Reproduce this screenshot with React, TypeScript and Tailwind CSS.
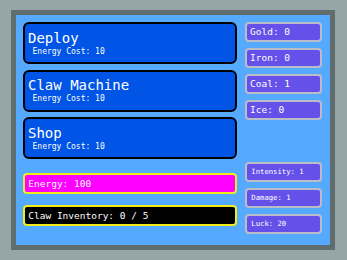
import React from "react";

const mono = { fontFamily: '"DejaVu Sans Mono", "Liberation Mono", monospace' };

function ActionButton({ title }: { title: string }) {
  return (
    <div className="h-[42px] rounded-[6px] border-2 border-black bg-[#0055e6] pl-[3px] pt-[6.5px] text-white">
      <div className="text-[14px] leading-[14px]">{title}</div>
      <div className="mt-[3.3px] pl-[4.5px] text-[8px] leading-[8px]">Energy Cost: 10</div>
    </div>
  );
}

function Stat({ label, small }: { label: string; small?: boolean }) {
  return (
    <div
      className={
        "flex h-[20px] items-center rounded-[4px] border-2 border-[#bcbcc8] bg-[#6650ea] text-white " +
        (small ? "pl-[4.3px] text-[7.25px] leading-none" : "pl-[3px] text-[9.5px] leading-none")
      }
    >
      {label}
    </div>
  );
}

export default function App() {
  return (
    <div className="h-[260px] w-[347px] bg-[#96a5a5] pt-[10px] pl-[11px]" style={mono}>
      <div className="h-[240px] w-[324px] border-[5px] border-[#616c6c] bg-[#55aaff]">
        <div className="flex gap-[8px] pt-[7px] pl-[7px]">
          <div className="flex w-[214px] flex-col">
            <div className="flex flex-col gap-[5.5px]">
              <ActionButton title="Deploy" />
              <ActionButton title="Claw Machine" />
              <ActionButton title="Shop" />
            </div>
            <div className="mt-[14px] flex h-[21px] items-center rounded-[4px] border-2 border-[#f2ec1a] bg-[#ff00ff] pl-[3.3px] text-[9.5px] leading-none text-white">
              Energy: 100
            </div>
            <div className="mt-[11px] flex h-[21px] items-center rounded-[4px] border-2 border-[#f2ec1a] bg-black pl-[3.3px] text-[9.5px] leading-none text-white">
              Claw Inventory: 0 / 5
            </div>
          </div>
          <div className="flex w-[77px] flex-col">
            <div className="flex flex-col gap-[6px]">
              <Stat label="Gold: 0" />
              <Stat label="Iron: 0" />
              <Stat label="Coal: 1" />
              <Stat label="Ice: 0" />
            </div>
            <div className="mt-[42px] flex flex-col gap-[6px]">
              <Stat label="Intensity: 1" small />
              <Stat label="Damage: 1" small />
              <Stat label="Luck: 20" small />
            </div>
          </div>
        </div>
      </div>
    </div>
  );
}
